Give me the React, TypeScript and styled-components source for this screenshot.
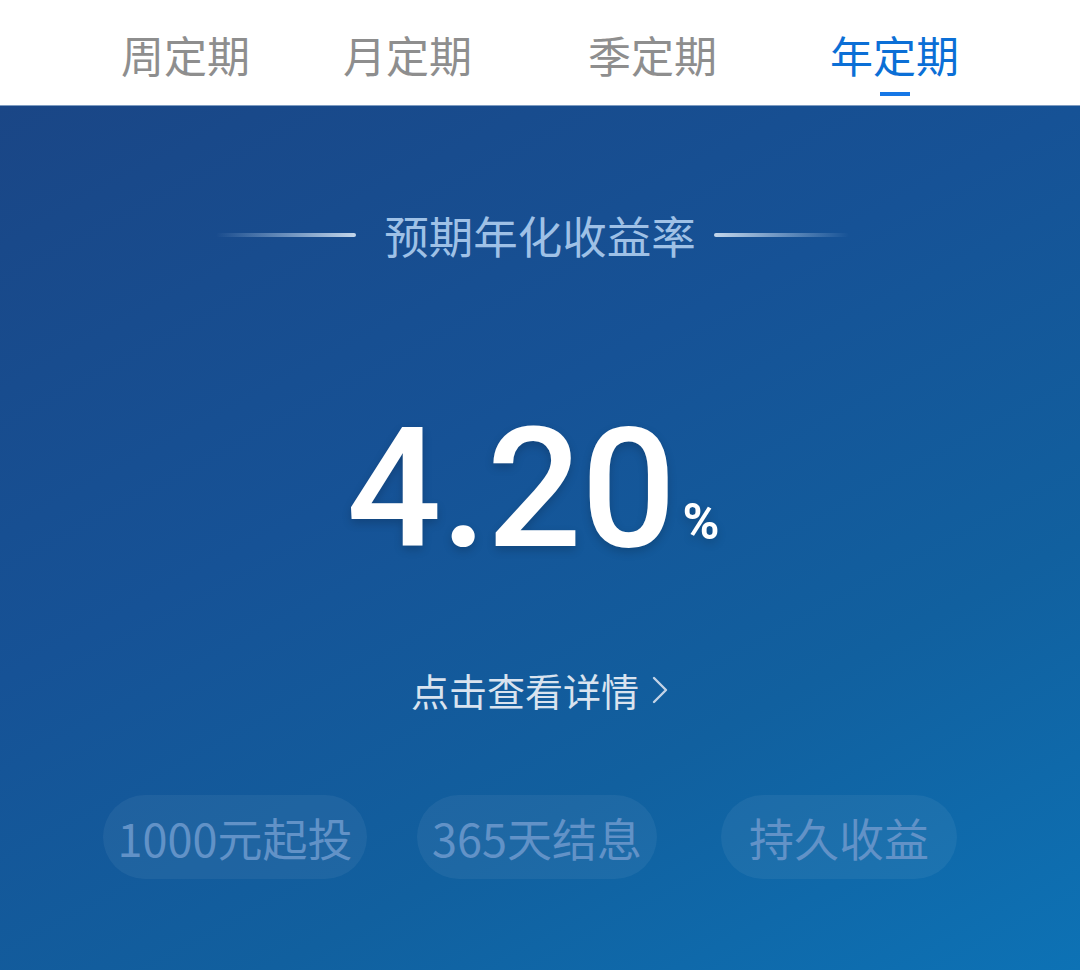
import React from "react";
import styled, { createGlobalStyle } from "styled-components";

const Global = createGlobalStyle`
  html, body { margin: 0; padding: 0; background: #ffffff; }
  body { font-family: "Noto Sans CJK SC", "Noto Sans", sans-serif; }
  #root { width: 1080px; height: 970px; overflow: hidden; }
`;

const Page = styled.div`
  width: 1080px;
  height: 970px;
  display: flex;
  flex-direction: column;
`;

const TabBar = styled.nav`
  height: 105px;
  flex: none;
  background: #ffffff;
  display: flex;
  align-items: flex-start;
  padding: 33px 0 0 121px;
  box-sizing: border-box;
`;

const Tab = styled.div<{ $active?: boolean; $gap: number }>`
  margin-left: ${(p) => p.$gap}px;
  display: flex;
  flex-direction: column;
  align-items: center;
  font-size: 43px;
  line-height: 43px;
  color: ${(p) => (p.$active ? "#0b6fd6" : "#8e8e8e")};
  font-family: "Noto Sans CJK SC", sans-serif;
`;

const Indicator = styled.span`
  margin-top: 16px;
  width: 30px;
  height: 4px;
  background: #1677e6;
`;

const Panel = styled.section`
  flex: 1;
  border-top: 1px solid #7e9cc1;
  background: linear-gradient(152deg, #1a4686 0%, #165296 40%, #11609f 70%, #0d72b5 100%);
  display: flex;
  flex-direction: column;
  align-items: center;
`;

const TitleRow = styled.div`
  margin-top: 107px;
  display: flex;
  align-items: center;
  padding-right: 15px;
`;

const Line = styled.span<{ $dir: "left" | "right"; $w: number }>`
  width: ${(p) => p.$w}px;
  height: 4px;
  border-radius: 2px;
  background: linear-gradient(
    ${(p) => (p.$dir === "left" ? "to right" : "to left")},
    rgba(190, 212, 236, 0) 0%,
    rgba(190, 212, 236, 0.55) 55%,
    rgba(205, 222, 240, 0.95) 100%
  );
`;

const Title = styled.h2`
  margin: 0 18px 0 28px;
  font-size: 44.5px;
  line-height: 44px;
  font-weight: 400;
  color: #9fc1e6;
  font-family: "Noto Sans CJK SC", sans-serif;
`;

const RateRow = styled.div`
  margin-top: 148px;
  height: 168px;
  display: flex;
  align-items: baseline;
  padding-right: 14px;
  color: #ffffff;
  font-family: Roboto, "Liberation Sans", Arial, sans-serif;
  text-shadow: 0 4px 10px rgba(0, 0, 0, 0.18);
`;

const Rate = styled.span`
  font-size: 167px;
  line-height: 168px;
  font-weight: 500;
  letter-spacing: -0.5px;
`;

const Percent = styled.span`
  font-size: 50px;
  line-height: 46px;
  font-weight: 700;
  margin-left: 7px;
  position: relative;
  top: -7px;
`;

const DetailLink = styled.a`
  margin-top: 98px;
  display: flex;
  align-items: center;
  gap: 12px;
  font-size: 38px;
  line-height: 37px;
  color: #d9e3ef;
  text-decoration: none;
  font-family: "Noto Sans CJK SC", sans-serif;
`;

const PillRow = styled.div`
  margin-top: 87px;
  align-self: stretch;
  display: grid;
  grid-template-columns: repeat(3, 302px);
  padding-left: 84px;
`;

const Pill = styled.div`
  justify-self: center;
  min-width: 236px;
  height: 84px;
  padding: 0 15px;
  box-sizing: border-box;
  border-radius: 42px;
  background: rgba(255, 255, 255, 0.055);
  display: flex;
  align-items: center;
  justify-content: center;
  font-size: 45px;
  color: #6292c7;
  font-family: "Noto Sans CJK SC", sans-serif;
  white-space: nowrap;
`;

const Chevron = () => (
  <svg width="18" height="30" viewBox="0 0 18 30" fill="none">
    <path d="M3 3 L15 15 L3 27" stroke="#c3d3e6" strokeWidth="2.4" strokeLinecap="round" strokeLinejoin="round" />
  </svg>
);

const tabs = [
  { label: "周定期", gap: 0 },
  { label: "月定期", gap: 93 },
  { label: "季定期", gap: 116 },
  { label: "年定期", gap: 113, active: true },
];

export default function App() {
  return (
    <Page>
      <Global />
      <TabBar>
        {tabs.map((t) => (
          <Tab key={t.label} $gap={t.gap} $active={t.active}>
            {t.label}
            {t.active && <Indicator />}
          </Tab>
        ))}
      </TabBar>
      <Panel>
        <TitleRow>
          <Line $dir="left" $w={140} />
          <Title>预期年化收益率</Title>
          <Line $dir="right" $w={135} />
        </TitleRow>
        <RateRow>
          <Rate>4.20</Rate>
          <Percent>%</Percent>
        </RateRow>
        <DetailLink href="#">
          点击查看详情
          <Chevron />
        </DetailLink>
        <PillRow>
          <Pill>1000元起投</Pill>
          <Pill>365天结息</Pill>
          <Pill>持久收益</Pill>
        </PillRow>
      </Panel>
    </Page>
  );
}
